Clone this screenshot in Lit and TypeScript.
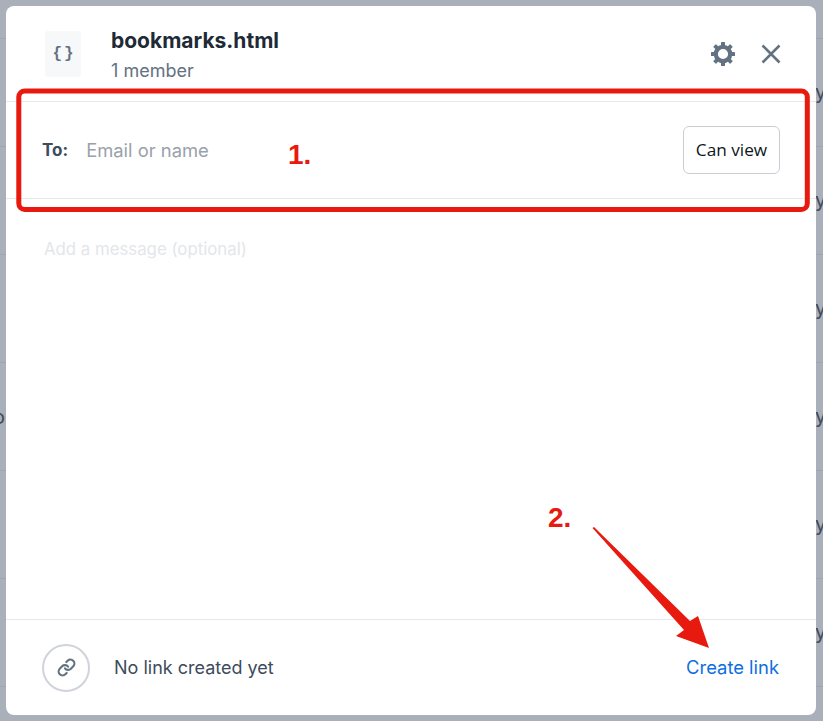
import { LitElement, css, html, svg } from 'lit';
import { customElement } from 'lit/decorators.js';

const rowLines = [38, 146, 254, 362, 470, 578, 686];
const rowLetters = [80, 188, 296, 404, 512, 620];
const gearTeeth = [0, 45, 90, 135, 180, 225, 270, 315];

@customElement('app-root')
export class AppRoot extends LitElement {
  static styles = css`
    :host {
      display: block;
      position: relative;
      width: 823px;
      height: 721px;
      overflow: hidden;
      background: #a9b0ba;
      font-family: 'Inter', 'Liberation Sans', sans-serif;
    }
    .backdrop-line {
      position: absolute;
      left: 0;
      right: 0;
      height: 1px;
      background: #9ea5af;
    }
    .backdrop-letter {
      position: absolute;
      left: 815px;
      font-size: 20px;
      line-height: 24px;
      color: #3d4b5c;
    }
    .backdrop-o {
      position: absolute;
      left: -7px;
      top: 405px;
      font-size: 20px;
      line-height: 24px;
      color: #3d4b5c;
    }
    .modal {
      position: absolute;
      left: 6px;
      top: 6px;
      width: 810px;
      height: 709px;
      box-sizing: border-box;
      background: #fff;
      border-radius: 8px;
      display: flex;
      flex-direction: column;
    }
    .header {
      height: 95px;
      box-sizing: border-box;
      padding: 25px 35px 0 39px;
      display: flex;
      align-items: flex-start;
    }
    .file-icon {
      width: 36px;
      height: 46px;
      box-sizing: border-box;
      padding-left: 2px;
      background: #f7f8f9;
      border-radius: 3px;
      display: flex;
      align-items: center;
      justify-content: center;
      font-family: 'Liberation Mono', monospace;
      font-weight: 700;
      font-size: 16px;
      letter-spacing: 2px;
      color: #637282;
    }
    .titles {
      margin-left: 30px;
      flex: 1;
    }
    .title {
      margin-top: -4px;
      font-size: 21px;
      line-height: 28px;
      font-weight: 700;
      color: #1e2a36;
    }
    .subtitle {
      margin-top: 4px;
      font-size: 18px;
      line-height: 24px;
      color: #637282;
    }
    .actions {
      display: flex;
      align-items: center;
      gap: 26px;
      margin-top: 11px;
    }
    .to-row {
      height: 98px;
      box-sizing: border-box;
      border-top: 1px solid #e6e8eb;
      border-bottom: 1px solid #e6e8eb;
      padding: 0 36px;
      display: flex;
      align-items: center;
    }
    .to-label {
      font-size: 17px;
      font-weight: 700;
      color: #3d4b5c;
    }
    .to-placeholder {
      margin-left: 18px;
      flex: 1;
      font-size: 18.4px;
      color: #9aa1ab;
    }
    .can-view {
      width: 97px;
      height: 48px;
      box-sizing: border-box;
      background: #fff;
      border: 1px solid #c9ced4;
      border-radius: 6px;
      font-family: 'Open Sans', sans-serif;
      font-size: 17.2px;
      color: #0d1620;
      padding: 0 0 2px;
    }
    .message {
      padding: 38px 38px 0;
      flex: 1;
      font-size: 16.8px;
      line-height: 24px;
      color: #e3e6ea;
    }
    .footer {
      height: 96px;
      box-sizing: border-box;
      border-top: 1px solid #e6e8eb;
      padding: 0 37px 0 36px;
      display: flex;
      align-items: center;
    }
    .link-icon {
      width: 48px;
      height: 48px;
      box-sizing: border-box;
      border: 2px solid #d0d4da;
      border-radius: 50%;
      display: flex;
      align-items: center;
      justify-content: center;
    }
    .no-link {
      margin-left: 24px;
      flex: 1;
      font-size: 18px;
      color: #3d4b5c;
    }
    .create-link {
      margin-bottom: 2px;
      font-size: 18.4px;
      color: #0d6fe0;
    }
    .notes {
      position: absolute;
      inset: 0;
      pointer-events: none;
    }
    .note {
      position: absolute;
      font-family: 'Liberation Sans', sans-serif;
      font-weight: 700;
      font-size: 28px;
      line-height: 32px;
      color: #e8190e;
    }
  `;

  render() {
    return html`
      ${rowLines.map((y) => html`<div class="backdrop-line" style="top:${y}px"></div>`)}
      ${rowLetters.map((y) => html`<div class="backdrop-letter" style="top:${y}px">y</div>`)}
      <div class="backdrop-o">o</div>

      <div class="modal">
        <div class="header">
          <div class="file-icon">{}</div>
          <div class="titles">
            <div class="title">bookmarks.html</div>
            <div class="subtitle">1 member</div>
          </div>
          <div class="actions">
            <svg width="24" height="24" viewBox="0 0 24 24" fill="#637282">
              <circle cx="12" cy="12" r="7.200" fill="none" stroke="#637282" stroke-width="4.200"/>
              ${gearTeeth.map((a) => svg`<rect x="10" y="0" width="4" height="5" rx="0.600" transform="rotate(${a} 12 12)"/>`)}
            </svg>
            <svg width="20" height="20" viewBox="0 0 20 20" stroke="#637282" stroke-width="2.600" fill="none">
              <path d="M1.500 1.500l17 17M18.500 1.500l-17 17"/>
            </svg>
          </div>
        </div>

        <div class="to-row">
          <span class="to-label">To:</span>
          <span class="to-placeholder">Email or name</span>
          <button class="can-view">Can view</button>
        </div>

        <div class="message">Add a message (optional)</div>

        <div class="footer">
          <div class="link-icon">
            <svg width="19" height="19" viewBox="0 0 24 24" fill="none" stroke="#637282" stroke-width="2.700" stroke-linecap="round" stroke-linejoin="round">
              <path d="M10 13a5 5 0 0 0 7.540.54l3-3a5 5 0 0 0-7.070-7.070l-1.720 1.710"/>
              <path d="M14 11a5 5 0 0 0-7.540-.54l-3 3a5 5 0 0 0 7.070 7.070l1.710-1.710"/>
            </svg>
          </div>
          <span class="no-link">No link created yet</span>
          <span class="create-link">Create link</span>
        </div>
      </div>

      <div class="notes">
        <svg width="823" height="721" style="position:absolute;left:0;top:0">
          <rect x="18.800" y="91" width="788.500" height="118.500" rx="6" fill="none" stroke="#e8190e" stroke-width="5"/>
          <path d="M592.500 528L594 527 690 621 698 616 709 648 676 636 684 630Z" fill="#e8190e"/>
        </svg>
        <div class="note" style="left:288px;top:139px">1.</div>
        <div class="note" style="left:548px;top:502px">2.</div>
      </div>
    `;
  }
}
